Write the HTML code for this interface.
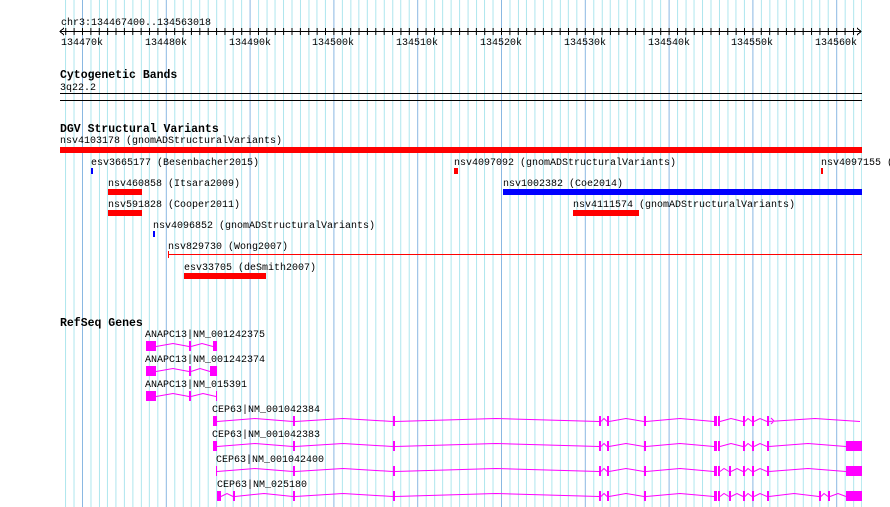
<!DOCTYPE html>
<html><head><meta charset="utf-8"><style>
html,body{margin:0;padding:0;background:#fff;width:890px;height:507px;overflow:hidden}
svg text{font-family:"Liberation Mono",monospace;font-size:10px;fill:#000}
svg text.b{font-weight:bold;font-size:11.5px}
</style></head><body>
<svg width="890" height="507" xmlns="http://www.w3.org/2000/svg" shape-rendering="crispEdges">
<defs>
<pattern id="g" x="82" y="0" width="83.8" height="507" patternUnits="userSpaceOnUse">
<rect x="0" y="0" width="1" height="507" fill="#8ab8e2"/>
<rect x="8.38" width="1" height="507" fill="#aee6ee"/>
<rect x="16.76" width="1" height="507" fill="#aee6ee"/>
<rect x="25.14" width="1" height="507" fill="#aee6ee"/>
<rect x="33.52" width="1" height="507" fill="#aee6ee"/>
<rect x="41.9" width="1" height="507" fill="#aee6ee"/>
<rect x="50.28" width="1" height="507" fill="#aee6ee"/>
<rect x="58.66" width="1" height="507" fill="#aee6ee"/>
<rect x="67.04" width="1" height="507" fill="#aee6ee"/>
<rect x="75.42" width="1" height="507" fill="#aee6ee"/>
</pattern>
<pattern id="t" x="82" y="0" width="8.38" height="40" patternUnits="userSpaceOnUse">
<rect x="0" y="28" width="1" height="7" fill="#000"/>
</pattern>
</defs>
<rect x="60" y="0" width="802" height="507" fill="url(#g)"/>
<text x="61" y="25">chr3:134467400..134563018</text>
<rect x="60" y="31" width="801" height="1" fill="#000"/>
<rect x="62" y="0" width="798" height="40" fill="url(#t)"/>
<path d="M64 28 L60 31.5 L64 35 M857 28 L861 31.5 L857 35" stroke="#000" fill="none" stroke-width="1"/>
<g text-anchor="middle">
<text x="82" y="45">134470k</text><text x="166" y="45">134480k</text><text x="250" y="45">134490k</text>
<text x="333" y="45">134500k</text><text x="417" y="45">134510k</text><text x="501" y="45">134520k</text>
<text x="585" y="45">134530k</text><text x="669" y="45">134540k</text><text x="752" y="45">134550k</text>
<text x="836" y="45">134560k</text>
</g>
<text class="b" x="60" y="78">Cytogenetic Bands</text>
<text x="60" y="90">3q22.2</text>
<rect x="60" y="93" width="802" height="1" fill="#000"/>
<rect x="60" y="100" width="802" height="1" fill="#000"/>
<text class="b" x="60" y="132">DGV Structural Variants</text>
<text x="60" y="143">nsv4103178 (gnomADStructuralVariants)</text>
<rect x="60" y="147" width="802" height="6" fill="#f00"/>
<text x="91" y="165">esv3665177 (Besenbacher2015)</text>
<rect x="91" y="168" width="2" height="6" fill="#00f"/>
<text x="454" y="165">nsv4097092 (gnomADStructuralVariants)</text>
<rect x="454" y="168" width="4" height="6" fill="#f00"/>
<text x="821" y="165">nsv4097155 (gnomADStructuralVariants)</text>
<rect x="821" y="168" width="2" height="6" fill="#f00"/>
<text x="108" y="186">nsv460858 (Itsara2009)</text>
<rect x="108" y="189" width="34" height="6" fill="#f00"/>
<text x="503" y="186">nsv1002382 (Coe2014)</text>
<rect x="503" y="189" width="359" height="6" fill="#00f"/>
<text x="108" y="207">nsv591828 (Cooper2011)</text>
<rect x="108" y="210" width="34" height="6" fill="#f00"/>
<text x="573" y="207">nsv4111574 (gnomADStructuralVariants)</text>
<rect x="573" y="210" width="66" height="6" fill="#f00"/>
<text x="153" y="228">nsv4096852 (gnomADStructuralVariants)</text>
<rect x="153" y="231" width="2" height="6" fill="#00f"/>
<text x="168" y="249">nsv829730 (Wong2007)</text>
<rect x="168" y="254" width="694" height="1" fill="#f00"/>
<rect x="168" y="251" width="1" height="7" fill="#f00"/>
<text x="184" y="270">esv33705 (deSmith2007)</text>
<rect x="184" y="273" width="82" height="6" fill="#f00"/>
<text class="b" x="60" y="326">RefSeq Genes</text>
<g shape-rendering="auto">
<text x="145" y="337">ANAPC13|NM_001242375</text>
<text x="145" y="362">ANAPC13|NM_001242374</text>
<text x="145" y="387">ANAPC13|NM_015391</text>
<text x="212" y="412">CEP63|NM_001042384</text>
<text x="212" y="437">CEP63|NM_001042383</text>
<text x="216" y="462">CEP63|NM_001042400</text>
<text x="217" y="487">CEP63|NM_025180</text>
</g>
<g fill="#f0f" stroke="none">
<rect x="146" y="341" width="10" height="10"/><rect x="189" y="341" width="2" height="10"/><rect x="213" y="341" width="4" height="10"/>
<rect x="146" y="366" width="10" height="10"/><rect x="189" y="366" width="2" height="10"/><rect x="210" y="366" width="7" height="10"/>
<rect x="146" y="391" width="10" height="10"/><rect x="189" y="391" width="2" height="10"/><rect x="216" y="391" width="1" height="10"/>
</g>
<g fill="none" stroke="#f0f" stroke-width="1" shape-rendering="auto">
<path d="M156 346.5 L173 343.5 L189 346.5 M191 346.5 L202 343.5 L213 346.5"/>
<path d="M156 371.5 L173 368.5 L189 371.5 M191 371.5 L200 368.5 L210 371.5"/>
<path d="M156 396.5 L173 393.5 L189 396.5 M191 396.5 L203 393.5 L216 396.5"/>
</g>
<g fill="#f0f">
<rect x="213" y="416" width="4" height="10"/>
<rect x="293" y="416" width="2" height="10"/><rect x="393" y="416" width="2" height="10"/>
<rect x="599" y="416" width="2" height="10"/><rect x="607" y="416" width="2" height="10"/>
<rect x="644" y="416" width="2" height="10"/>
<rect x="714" y="416" width="3" height="10"/><rect x="718" y="416" width="2" height="10"/>
<rect x="743" y="416" width="2" height="10"/><rect x="752" y="416" width="2" height="10"/>
<rect x="767" y="416" width="2" height="10"/>
</g>
<g fill="none" stroke="#f0f" shape-rendering="auto">
<path d="M217 421.5 L255 418.5 L293 421.5 M295 421.5 L343 418.5 L393 421.5 M395 421.5 L496 418.5 L599 421.5 M601 421.5 L604 418.5 L607 421.5 M609 421.5 L626 418.5 L644 421.5 M646 421.5 L680 418.5 L714 421.5 M720 421.5 L731 418.5 L743 421.5 M745 421.5 L748 418.5 L752 421.5 M754 421.5 L760 418.5 L767 421.5 M769 421.5 L815 418.5 L860 421.5 M771 418 L774 421 L771 424"/>
</g>
<g fill="#f0f">
<rect x="213" y="441" width="4" height="10"/>
<rect x="293" y="441" width="2" height="10"/><rect x="393" y="441" width="2" height="10"/>
<rect x="599" y="441" width="2" height="10"/><rect x="607" y="441" width="2" height="10"/>
<rect x="644" y="441" width="2" height="10"/>
<rect x="714" y="441" width="3" height="10"/><rect x="718" y="441" width="2" height="10"/>
<rect x="743" y="441" width="2" height="10"/><rect x="752" y="441" width="2" height="10"/>
<rect x="767" y="441" width="2" height="10"/>
<rect x="846" y="441" width="16" height="10"/>
</g>
<g fill="none" stroke="#f0f" shape-rendering="auto">
<path d="M217 446.5 L255 443.5 L293 446.5 M295 446.5 L343 443.5 L393 446.5 M395 446.5 L496 443.5 L599 446.5 M601 446.5 L604 443.5 L607 446.5 M609 446.5 L626 443.5 L644 446.5 M646 446.5 L680 443.5 L714 446.5 M720 446.5 L731 443.5 L743 446.5 M745 446.5 L748 443.5 L752 446.5 M754 446.5 L760 443.5 L767 446.5 M769 446.5 L808 443.5 L846 446.5"/>
</g>
<g fill="#f0f">
<rect x="216" y="466" width="1" height="10"/>
<rect x="293" y="466" width="2" height="10"/><rect x="393" y="466" width="2" height="10"/>
<rect x="599" y="466" width="2" height="10"/><rect x="607" y="466" width="2" height="10"/>
<rect x="644" y="466" width="2" height="10"/>
<rect x="714" y="466" width="3" height="10"/><rect x="718" y="466" width="2" height="10"/>
<rect x="729" y="466" width="2" height="10"/>
<rect x="743" y="466" width="2" height="10"/><rect x="752" y="466" width="2" height="10"/>
<rect x="767" y="466" width="2" height="10"/>
<rect x="846" y="466" width="16" height="10"/>
</g>
<g fill="none" stroke="#f0f" shape-rendering="auto">
<path d="M217 471.5 L255 468.5 L293 471.5 M295 471.5 L343 468.5 L393 471.5 M395 471.5 L496 468.5 L599 471.5 M601 471.5 L604 468.5 L607 471.5 M609 471.5 L626 468.5 L644 471.5 M646 471.5 L680 468.5 L714 471.5 M720 471.5 L724 468.5 L729 471.5 M731 471.5 L737 468.5 L743 471.5 M745 471.5 L748 468.5 L752 471.5 M754 471.5 L760 468.5 L767 471.5 M769 471.5 L808 468.5 L846 471.5"/>
</g>
<g fill="#f0f">
<rect x="217" y="491" width="4" height="10"/><rect x="233" y="491" width="2" height="10"/>
<rect x="293" y="491" width="2" height="10"/><rect x="393" y="491" width="2" height="10"/>
<rect x="599" y="491" width="2" height="10"/><rect x="607" y="491" width="2" height="10"/>
<rect x="644" y="491" width="2" height="10"/>
<rect x="714" y="491" width="3" height="10"/><rect x="718" y="491" width="2" height="10"/>
<rect x="729" y="491" width="2" height="10"/>
<rect x="743" y="491" width="2" height="10"/><rect x="752" y="491" width="2" height="10"/>
<rect x="767" y="491" width="2" height="10"/>
<rect x="819" y="491" width="2" height="10"/><rect x="828" y="491" width="2" height="10"/>
<rect x="846" y="491" width="16" height="10"/>
</g>
<g fill="none" stroke="#f0f" shape-rendering="auto">
<path d="M221 496.5 L227 493.5 L233 496.5 M235 496.5 L264 493.5 L293 496.5 M295 496.5 L343 493.5 L393 496.5 M395 496.5 L496 493.5 L599 496.5 M601 496.5 L604 493.5 L607 496.5 M609 496.5 L626 493.5 L644 496.5 M646 496.5 L680 493.5 L714 496.5 M720 496.5 L724 493.5 L729 496.5 M731 496.5 L737 493.5 L743 496.5 M745 496.5 L748 493.5 L752 496.5 M754 496.5 L760 493.5 L767 496.5 M769 496.5 L794 493.5 L819 496.5 M821 496.5 L824 493.5 L828 496.5 M830 496.5 L838 493.5 L846 496.5"/>
</g>
</svg>
</body></html>
